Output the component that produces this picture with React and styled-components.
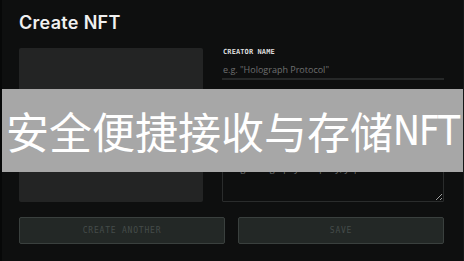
import React from "react";
import styled, { createGlobalStyle } from "styled-components";

const GlobalStyle = createGlobalStyle`
  html, body { margin: 0; padding: 0; background: #0e0f0f; }
  * { box-sizing: border-box; }
`;

const Page = styled.div`
  position: relative;
  width: 464px;
  height: 261px;
  overflow: hidden;
  background: #0e0f0f;
  border-left: 2px solid #070808;
  border-right: 1px solid #151717;
  padding: 13px 19px 0 17px;
  font-family: Inter, "Noto Sans", sans-serif;
`;

const Title = styled.h1`
  margin: 0;
  font-size: 18px;
  line-height: 20px;
  font-weight: 600;
  color: #f0f0f0;
  letter-spacing: 0.3px;
`;

const Body = styled.div`
  margin-top: 15px;
  display: grid;
  grid-template-columns: 184px 1fr;
  column-gap: 19px;
  height: 154px;
`;

const Preview = styled.div`
  background: #232424;
  border-radius: 2px;
`;

const Column = styled.div`
  display: flex;
  flex-direction: column;
  min-height: 0;
`;

const Label = styled.label`
  display: block;
  padding-left: 1px;
  font-family: "DejaVu Sans Mono", "Liberation Mono", monospace;
  font-weight: 700;
  font-size: 7px;
  line-height: 9px;
  color: #dcdcdc;
  letter-spacing: 0.1px;
`;

const Input = styled.input`
  display: block;
  width: 100%;
  margin-top: 3px;
  height: 20px;
  padding: 0 0 0 1px;
  background: transparent;
  border: none;
  border-bottom: 2px solid #262828;
  color: #ddd;
  font-family: "Open Sans", "Noto Sans", sans-serif;
  font-size: 9px;
  outline: none;
  &::placeholder { color: #6e7070; }
`;

const TextArea = styled.textarea`
  display: block;
  width: 100%;
  height: 44px;
  margin-top: auto;
  padding: 4px 10px;
  background: transparent;
  border: 1px solid #2a2c2c;
  border-radius: 1px;
  color: #ddd;
  font-family: "Open Sans", "Noto Sans", sans-serif;
  font-size: 9px;
  line-height: 12px;
  outline: none;
  resize: vertical;
  &::placeholder { color: #6e7070; }
`;

const Footer = styled.div`
  margin-top: 15px;
  display: grid;
  grid-template-columns: 206px 206px;
  column-gap: 13px;
`;

const Button = styled.button`
  height: 27px;
  background: #232826;
  border: 1px solid #3a403e;
  border-radius: 2px;
  color: #454c4a;
  font-family: "DejaVu Sans Mono", "Liberation Mono", monospace;
  font-size: 8px;
  letter-spacing: 0.8px;
  text-transform: uppercase;
  cursor: default;
`;

const Banner = styled.div`
  position: absolute;
  left: 0;
  right: 0;
  top: 89px;
  height: 83px;
  background: #a7a7a7;
  display: flex;
  align-items: center;
  justify-content: center;
  color: #ffffff;
  font-family: "Noto Sans CJK SC", "Noto Sans", sans-serif;
  font-size: 43px;
  line-height: 1;
  white-space: nowrap;
`;

const Latin = styled.span`
  font-family: "DejaVu Sans Condensed", "Noto Sans CJK SC", sans-serif;
  font-size: 40px;
  letter-spacing: -1px;
`;

export default function App() {
  return (
    <>
      <GlobalStyle />
      <Page>
        <Title>Create NFT</Title>
        <Body>
          <Preview />
          <Column>
            <Label>CREATOR NAME</Label>
            <Input placeholder='e.g. "Holograph Protocol"' />
            <TextArea placeholder="e.g. Holography company, yep" />
          </Column>
        </Body>
        <Footer>
          <Button>Create Another</Button>
          <Button>Save</Button>
        </Footer>
        <Banner>
          安全便捷接收与存储<Latin>NFT</Latin>
        </Banner>
      </Page>
    </>
  );
}
